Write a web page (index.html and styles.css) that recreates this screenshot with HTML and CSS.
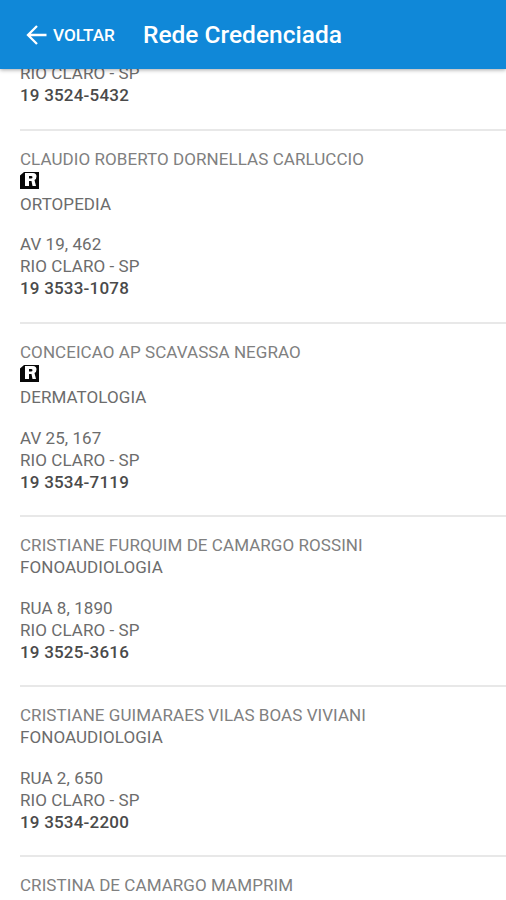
FILE: index.html
```html
<!DOCTYPE html>
<html lang="pt-BR">
<head>
<meta charset="utf-8">
<title>Rede Credenciada</title>
<link rel="stylesheet" href="styles.css">
</head>
<body>
<div class="screen">
<header class="toolbar">
  <svg class="back-icon" viewBox="0 0 22 20" fill="none" stroke="currentColor" stroke-width="2.3"><path d="M20.5 10H2.5M11 1L2 10l9 9"/></svg>
  <span class="back">VOLTAR</span>
  <h1 class="title">Rede Credenciada</h1>
</header>
<main class="list">
  <section class="item first">
    <p>RIO CLARO - SP</p>
    <p class="phone">19 3524-5432</p>
  </section>
  <section class="item">
    <p class="name">CLAUDIO ROBERTO DORNELLAS CARLUCCIO</p>
    <div class="badge"><svg viewBox="0 0 19 18"><path fill="#080808" d="M0 4.500L4 1h15v17H0z"/><path fill="#fff" fill-rule="evenodd" d="M5 2h8q3.500 0 3.500 3.500 0 2.500-2 3.500l1.500 6h-3.500l-1-5H9v5H5V5.500zM9 5v2.500h2q1.500 0 1.500-1.250T11 5z"/></svg></div>
    <p>ORTOPEDIA</p>
    <p class="street">AV 19, 462</p>
    <p>RIO CLARO - SP</p>
    <p class="phone">19 3533-1078</p>
  </section>
  <section class="item">
    <p class="name">CONCEICAO AP SCAVASSA NEGRAO</p>
    <div class="badge"><svg viewBox="0 0 19 18"><path fill="#080808" d="M0 4.500L4 1h15v17H0z"/><path fill="#fff" fill-rule="evenodd" d="M5 2h8q3.500 0 3.500 3.500 0 2.500-2 3.500l1.500 6h-3.500l-1-5H9v5H5V5.500zM9 5v2.500h2q1.500 0 1.500-1.250T11 5z"/></svg></div>
    <p>DERMATOLOGIA</p>
    <p class="street">AV 25, 167</p>
    <p>RIO CLARO - SP</p>
    <p class="phone">19 3534-7119</p>
  </section>
  <section class="item">
    <p class="name">CRISTIANE FURQUIM DE CAMARGO ROSSINI</p>
    <p>FONOAUDIOLOGIA</p>
    <p class="street">RUA 8, 1890</p>
    <p>RIO CLARO - SP</p>
    <p class="phone">19 3525-3616</p>
  </section>
  <section class="item">
    <p class="name">CRISTIANE GUIMARAES VILAS BOAS VIVIANI</p>
    <p>FONOAUDIOLOGIA</p>
    <p class="street">RUA 2, 650</p>
    <p>RIO CLARO - SP</p>
    <p class="phone">19 3534-2200</p>
  </section>
  <section class="item">
    <p class="name">CRISTINA DE CAMARGO MAMPRIM</p>
  </section>
</main>
</div>
</body>
</html>
```
FILE: styles.css
```css
* { box-sizing: border-box; }
body { margin: 0; font-family: Roboto, sans-serif; background: #fff; color: #6c6c6c; }
p, h1 { margin: 0; }
.screen { height: 900px; overflow: hidden; display: flex; flex-direction: column; }
.toolbar { height: 69px; flex: none; background: #1088d8; color: #fff; display: flex; align-items: center; padding-left: 26px; box-shadow: 0 1px 4px rgba(0,0,0,.35); z-index: 1; }
.back-icon { width: 22px; height: 20px; }
.back { font-size: 17.2px; font-weight: 500; margin-left: 5px; width: 90px; }
.title { font-size: 24.5px; font-weight: 500; }
.list { flex: none; font-size: 17px; letter-spacing: .06px; line-height: 22px; padding-left: 20px; margin-top: -7px; white-space: nowrap; }
.item { height: 170px; border-bottom: 2px solid #e8e8e8; padding-top: 17px; }
.item:has(.badge) { height: 193.2px; }
.first { height: 68.6px; padding-top: 0; }
.item:last-child { border: 0; height: 60px; }
.name { color: #808080; }
.badge { height: 23.2px; padding-top: 1px; }
.badge svg { display: block; width: 19px; height: 18px; }
.street { margin-top: 18.6px; }
.phone { font-weight: 500; color: #4a4a4a; letter-spacing: .2px; }
```
